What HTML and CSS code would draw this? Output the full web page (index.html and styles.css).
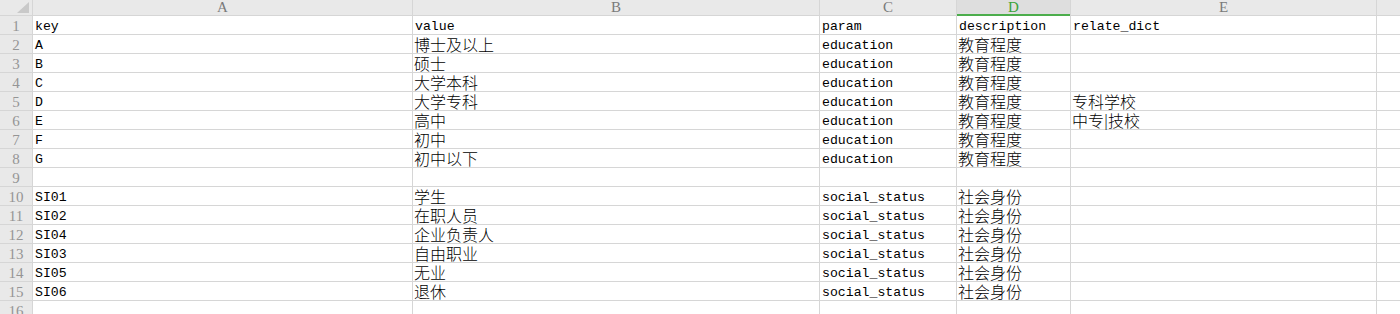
FILE: index.html
```html
<!DOCTYPE html>
<html lang="zh-CN">
<head>
<meta charset="utf-8">
<title>Sheet</title>
<link rel="stylesheet" href="styles.css">
</head>
<body>
<div class="sheet">
  <div class="h corner"><svg width="12" height="11" viewBox="0 0 12 11"><polygon points="12,0 12,11 0,11" fill="#c9c9c9"/></svg></div>
  <div class="h">A</div>
  <div class="h">B</div>
  <div class="h">C</div>
  <div class="h sel">D</div>
  <div class="h">E</div>
  <div class="h"></div>

  <div class="n">1</div><div class="c">key</div><div class="c">value</div><div class="c">param</div><div class="c">description</div><div class="c">relate_dict</div><div class="c"></div>
  <div class="n">2</div><div class="c">A</div><div class="c z">博士及以上</div><div class="c">education</div><div class="c z">教育程度</div><div class="c"></div><div class="c"></div>
  <div class="n">3</div><div class="c">B</div><div class="c z">硕士</div><div class="c">education</div><div class="c z">教育程度</div><div class="c"></div><div class="c"></div>
  <div class="n">4</div><div class="c">C</div><div class="c z">大学本科</div><div class="c">education</div><div class="c z">教育程度</div><div class="c"></div><div class="c"></div>
  <div class="n">5</div><div class="c">D</div><div class="c z">大学专科</div><div class="c">education</div><div class="c z">教育程度</div><div class="c z">专科学校</div><div class="c"></div>
  <div class="n">6</div><div class="c">E</div><div class="c z">高中</div><div class="c">education</div><div class="c z">教育程度</div><div class="c z">中专|技校</div><div class="c"></div>
  <div class="n">7</div><div class="c">F</div><div class="c z">初中</div><div class="c">education</div><div class="c z">教育程度</div><div class="c"></div><div class="c"></div>
  <div class="n">8</div><div class="c">G</div><div class="c z">初中以下</div><div class="c">education</div><div class="c z">教育程度</div><div class="c"></div><div class="c"></div>
  <div class="n">9</div><div class="c"></div><div class="c"></div><div class="c"></div><div class="c"></div><div class="c"></div><div class="c"></div>
  <div class="n">10</div><div class="c">SI01</div><div class="c z">学生</div><div class="c">social_status</div><div class="c z">社会身份</div><div class="c"></div><div class="c"></div>
  <div class="n">11</div><div class="c">SI02</div><div class="c z">在职人员</div><div class="c">social_status</div><div class="c z">社会身份</div><div class="c"></div><div class="c"></div>
  <div class="n">12</div><div class="c">SI04</div><div class="c z">企业负责人</div><div class="c">social_status</div><div class="c z">社会身份</div><div class="c"></div><div class="c"></div>
  <div class="n">13</div><div class="c">SI03</div><div class="c z">自由职业</div><div class="c">social_status</div><div class="c z">社会身份</div><div class="c"></div><div class="c"></div>
  <div class="n">14</div><div class="c">SI05</div><div class="c z">无业</div><div class="c">social_status</div><div class="c z">社会身份</div><div class="c"></div><div class="c"></div>
  <div class="n">15</div><div class="c">SI06</div><div class="c z">退休</div><div class="c">social_status</div><div class="c z">社会身份</div><div class="c"></div><div class="c"></div>
  <div class="n">16</div><div class="c"></div><div class="c"></div><div class="c"></div><div class="c"></div><div class="c"></div><div class="c"></div>
</div>
</body>
</html>
```
FILE: styles.css
```css
html, body {
  margin: 0;
  padding: 0;
  height: 314px;
  overflow: hidden;
  background: #ffffff;
}

.sheet {
  display: grid;
  grid-template-columns: 32px 379px 406px 136px 113px 305px 1fr;
  grid-template-rows: 15px repeat(16, 18px);
  gap: 1px;
  background: #d6d6d6;
  width: 1400px;
}

.h {
  background: #e9e9e9;
  color: #7a7a7a;
  font-family: "Liberation Serif", "Times New Roman", serif;
  font-size: 15px;
  line-height: 15px;
  text-align: center;
  overflow: hidden;
}

.corner {
  display: flex;
  justify-content: flex-end;
  align-items: flex-end;
  padding: 0 3px 2px 0;
}

.sel {
  background: #dedede;
  color: #3aa33a;
  box-shadow: inset 0 -1px 0 #4cad4c, 0 1px 0 #4cad4c;
  position: relative;
  z-index: 1;
}

.n {
  background: #e9e9e9;
  color: #959595;
  font-family: "Liberation Serif", "Times New Roman", serif;
  font-size: 15px;
  line-height: 18px;
  padding-top: 1px;
  height: 17px;
  text-align: center;
  overflow: hidden;
}

.c {
  display: flex;
  align-items: flex-end;
  background: #ffffff;
  color: #000000;
  font-family: "Liberation Mono", "Courier New", monospace;
  font-size: 13.2px;
  line-height: 15px;
  padding-left: 2px;
  white-space: nowrap;
  height: 18px;
}

.z {
  font-family: "Noto Sans CJK SC", "Noto Sans", sans-serif;
  font-size: 16px;
  font-weight: 300;
  line-height: 18px;
  padding-left: 1px;
}
```
